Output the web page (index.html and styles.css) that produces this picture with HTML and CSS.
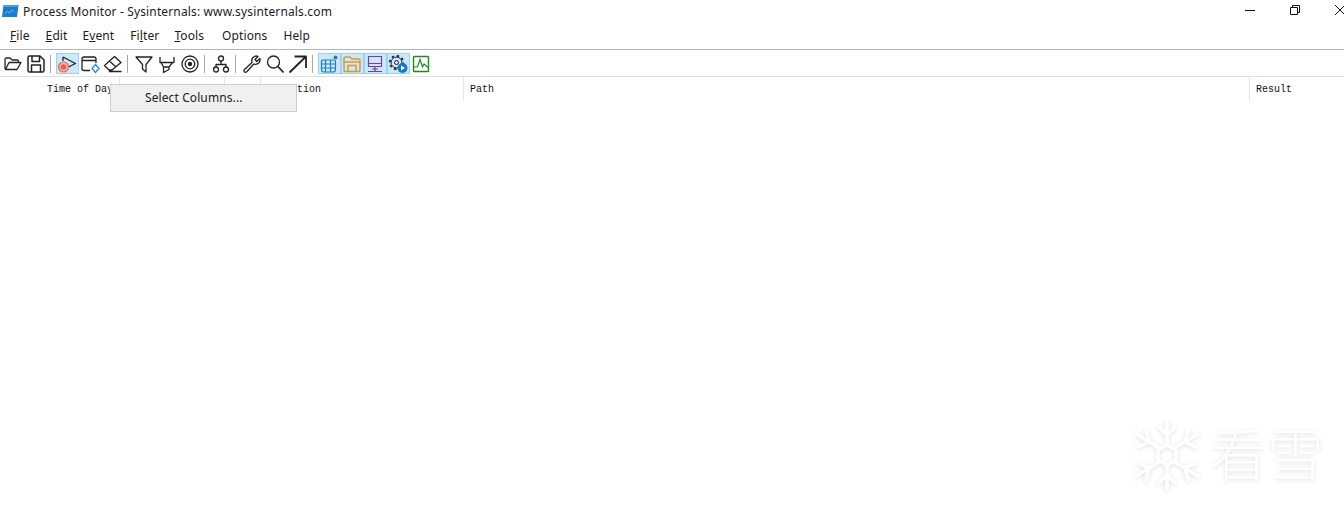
FILE: index.html
```html
<!DOCTYPE html>
<html lang="en">
<head>
<meta charset="utf-8">
<title>Process Monitor - Sysinternals: www.sysinternals.com</title>
<link rel="stylesheet" href="styles.css">
</head>
<body>
<div class="app">
  <header class="titlebar">
    <svg class="appicon" width="18" height="14" viewBox="0 0 18 14"><path d="M2.500 1H17.500L16 13H1Z" fill="#1a7ed0"/><path d="M2.500 1H17.500L17.200 3H2.200Z" fill="#4a9fe6"/><path d="M4 9L6.500 7.500L8.500 9L11 6L13.500 8" fill="none" stroke="#6db4ea" stroke-width="1"/></svg>
    <span class="title">Process Monitor - Sysinternals: www.sysinternals.com</span>
    <div class="controls">
      <span class="ctl"><svg width="12" height="12" viewBox="0 0 12 12"><path d="M1 6.5H11" stroke="#111" stroke-width="1"/></svg></span>
      <span class="ctl"><svg width="12" height="12" viewBox="0 0 12 12"><path d="M1.5 3.5H8.5V10.5H1.5Z M3.5 3.5V1.5H10.5V8.5H8.5" fill="none" stroke="#111" stroke-width="1"/></svg></span>
      <span class="ctl"><svg width="12" height="12" viewBox="0 0 12 12"><path d="M1 1L11 11M11 1L1 11" stroke="#111" stroke-width="1"/></svg></span>
    </div>
  </header>
  <nav class="menubar">
    <span class="m"><u>F</u>ile</span>
    <span class="m"><u>E</u>dit</span>
    <span class="m m-back">E<u>v</u>ent</span>
    <span class="m">Fi<u>l</u>ter</span>
    <span class="m m-back"><u>T</u>ools</span>
    <span class="m m-options">Options</span>
    <span class="m">Help</span>
  </nav>
  <div class="toolbar">
    <span class="btn"><svg viewBox="0 0 20 20"><path d="M2 15V5.5Q2 4 3.5 4H7L9 6H14Q15.500 6 15.500 7.500V8.500M2.500 15.500H14L18 8.500H6L2.500 15.500Z" class="k"/></svg></span>
    <span class="btn"><svg viewBox="0 0 20 20"><path d="M3.500 2H14L18 6V16.500Q18 18 16.500 18H3.500Q2 18 2 16.500V3.500Q2 2 3.500 2Z M6 2.500V7.500H13.500V2.500 M5.500 18V11H14.500V18" class="k k2"/></svg></span>
    <span class="sep"></span>
    <span class="btn on"><svg viewBox="0 0 20 20"><path d="M6 3L18.500 9.500L11.500 13M6 3V7" class="k"/><circle cx="6.500" cy="13" r="5" fill="#fbb9a8" stroke="#e9694f" stroke-width="1.200"/><circle cx="6.500" cy="13" r="2.800" fill="#ee5f45"/></svg></span>
    <span class="btn"><svg viewBox="0 0 20 20"><path d="M10 16.500H4Q2 16.500 2 14.500V5Q2 3 4 3H14Q16 3 16 5V9M2 6.500H16" class="k"/><path d="M15.500 10.500L19 14.500L15.500 18.500L12 14.500Z" fill="none" stroke="#1e88e5" stroke-width="1.300"/></svg></span>
    <span class="btn"><svg viewBox="0 0 20 20"><path d="M1.500 11.500L11.500 2.500L18 8.500L9 16H6Z M6.500 7L13 13 M6 17.500H18.500" class="k"/></svg></span>
    <span class="sep"></span>
    <span class="btn"><svg viewBox="0 0 20 20"><path d="M2 3H18L12 10.500V18L8.500 15V10.500Z" class="k"/></svg></span>
    <span class="btn"><svg viewBox="0 0 20 20"><path d="M3 3V8.500H17V3M4 8.500L6.500 13H12L15.500 8.500M6.500 13V18.500L12 15.500V13" class="k"/></svg></span>
    <span class="btn"><svg viewBox="0 0 20 20"><circle cx="10" cy="10" r="8" class="k"/><circle cx="10" cy="10" r="4.800" class="k"/><circle cx="10" cy="10" r="2.200" fill="#222"/></svg></span>
    <span class="sep"></span>
    <span class="btn"><svg viewBox="0 0 20 20"><circle cx="10" cy="4.500" r="2.500" class="k"/><circle cx="5" cy="15.500" r="2.500" class="k"/><circle cx="15" cy="15.500" r="2.500" class="k"/><path d="M10 7V10M5 13V10.500H15V13" class="k"/></svg></span>
    <span class="sep"></span>
    <span class="btn"><svg viewBox="0 0 20 20"><path d="M2.500 15.500L10 8.500Q9 4 12.500 2.500Q14.500 1.500 16 2.500L13 5.500L14.800 7.500L17.800 4.500Q18.500 7 17 8.800Q14.800 11 11.800 10L4.800 17.800Q3.500 18.800 2.300 17.800Q1.500 16.500 2.500 15.500Z" class="k"/></svg></span>
    <span class="btn"><svg viewBox="0 0 20 20"><circle cx="8.500" cy="8" r="6" class="k"/><path d="M13 12.500L18.500 18.500" class="k k3"/></svg></span>
    <span class="btn"><svg viewBox="0 0 20 20"><path d="M1.500 18.500L17.500 3M6.500 2.500H18V14" class="k k3"/></svg></span>
    <span class="sep"></span>
    <span class="btn on"><svg viewBox="0 0 20 20"><path d="M3.500 6H14.500Q16.500 6 16.500 8V15.500Q16.500 18 14 18H5Q2.500 18 2.500 15.500V7ZM2.500 10H16.500M2.500 14H16.500M6.500 6V18M11.500 6V18" fill="none" stroke="#1a7fc4" stroke-width="1.200"/><circle cx="16.500" cy="3.500" r="2" fill="#1a7fc4"/></svg></span>
    <span class="btn on"><svg viewBox="0 0 20 20"><path d="M2 16V4.500Q2 3 3.500 3H8L10 5H16.500Q18 5 18 6.500V16Q18 17.500 16.500 17.500H3.500Q2 17.500 2 16ZM2 8H18M6 17.500V11.500H14V17.500" fill="none" stroke="#dd9a20" stroke-width="1.500"/></svg></span>
    <span class="btn on"><svg viewBox="0 0 20 20"><path d="M3.500 2.500H16.500V12.500H3.500ZM10 12.500V17M3 17.500H17M7 15H13" fill="none" stroke="#7a3ca1" stroke-width="1.200"/><path d="M3.500 9.500H16.500" stroke="#7a3ca1" stroke-width="1"/></svg></span>
    <span class="btn on"><svg viewBox="0 0 20 20"><circle cx="8.500" cy="8.500" r="5.400" fill="none" stroke="#222" stroke-width="1"/><circle cx="8.500" cy="8.500" r="6.700" fill="none" stroke="#222" stroke-width="1.800" stroke-dasharray="2.600 2.660"/><circle cx="8.500" cy="8.500" r="2" fill="none" stroke="#222" stroke-width="1"/><circle cx="14.500" cy="14" r="5" fill="#1378d0"/><path d="M13 11.500L17 14L13 16.500Z" fill="#fff"/></svg></span>
    <span class="btn"><svg viewBox="0 0 20 20"><rect x="2.500" y="2.500" width="15" height="15" rx="0.800" fill="none" stroke="#1e8a1e" stroke-width="1.400"/><path d="M3 13H6.500L9 5.500L11.500 13L13 10L17 13.500" fill="none" stroke="#1e8a1e" stroke-width="1.200"/></svg></span>
  </div>
  <div class="columns">
    <span class="col c-time">Time of Day</span>
    <span class="col c-proc"></span>
    <span class="col c-pid"></span>
    <span class="col c-op">Operation</span>
    <span class="col c-path">Path</span>
    <span class="col c-result">Result</span>
  </div>
  <div class="ctxmenu">Select Columns...</div>
  <div class="watermark">
    <svg width="68" height="76" viewBox="0 0 68 76"><g fill="none" stroke="#fff" stroke-width="3.500" stroke-linecap="round"><path d="M34 3V28M34 48V73M26 10L34 18L42 10M26 66L34 58L42 66"/><path d="M3 17L25 30M43 46L65 59M5 30L16 25L13 13M63 46L52 51L55 63"/><path d="M65 17L43 30M25 46L3 59M63 30L52 25L55 13M5 46L16 51L13 63"/><path d="M34 28L43 33V43L34 48L25 43V33Z"/></g></svg>
    <span class="wm-text">看雪</span>
  </div>
</div>
</body>
</html>
```
FILE: styles.css
```css
html, body {
  margin: 0;
  padding: 0;
  background: #fff;
}
.app {
  position: relative;
  display: flex;
  flex-direction: column;
  width: 1344px;
  height: 517px;
  overflow: hidden;
  font-family: "Noto Sans", "Liberation Sans", sans-serif;
  color: #1c1c1c;
}
.titlebar {
  display: flex;
  align-items: center;
  height: 22px;
  flex: none;
}
.appicon {
  margin-left: 1px;
  margin-right: 4px;
  flex: none;
}
.title {
  font-size: 12px;
  letter-spacing: 0.14px;
  white-space: nowrap;
}
.controls {
  display: flex;
  margin-left: auto;
  margin-right: -18px;
}
.ctl {
  display: flex;
  justify-content: center;
  width: 45px;
  height: 18px;
  padding-top: 3px;
}
.menubar {
  display: flex;
  align-items: center;
  flex: none;
  height: 27px;
  padding-left: 10px;
  gap: 16px;
  border-bottom: 1px solid #b4b4bc;
  font-size: 12px;
  letter-spacing: 0.1px;
}
.m-back {
  margin-left: -1px;
}
.m-options {
  margin-left: 2px;
}
.toolbar {
  display: flex;
  flex: none;
  box-sizing: border-box;
  height: 27px;
  padding: 3px 0 0 2px;
  border-bottom: 1px solid #e0e0e0;
}
.btn {
  display: flex;
  align-items: center;
  justify-content: center;
  box-sizing: border-box;
  width: 23px;
  height: 21px;
  padding-right: 1px;
}
.btn svg {
  flex: none;
  width: 20px;
  height: 20px;
}
.on {
  background: #cce8ff;
  box-shadow: inset 0 0 0 1px #99d1ff;
}
.k {
  fill: none;
  stroke: #222;
  stroke-width: 1.300;
  stroke-linejoin: round;
}
.k2 {
  stroke-width: 1.500;
}
.k3 {
  stroke-width: 1.800;
}
.sep {
  width: 8px;
  height: 21px;
  box-sizing: border-box;
  padding-left: 2px;
  background: linear-gradient(#a8a8a8, #a8a8a8) 2px 2px / 1px 18px no-repeat;
}
.columns {
  display: flex;
  flex: none;
  height: 24px;
  font-family: "Liberation Mono", monospace;
  font-size: 10px;
  line-height: 26px;
  color: #111;
}
.col {
  box-sizing: border-box;
  flex: none;
  padding-left: 6px;
  border-right: 1px solid #e5e5e5;
  white-space: nowrap;
}
.c-time {
  width: 120px;
  padding-left: 47px;
}
.c-proc { width: 105px; }
.c-pid { width: 36px; }
.c-op { width: 203px; }
.c-path { width: 786px; }
.c-result { border-right: 0; }
.ctxmenu {
  position: absolute;
  left: 110px;
  top: 84px;
  box-sizing: border-box;
  width: 187px;
  height: 28px;
  padding-left: 34px;
  background: #f0f0f0;
  border: 1px solid #ccc;
  font-size: 12px;
  line-height: 26px;
  letter-spacing: 0.1px;
  color: #222;
}
.watermark {
  position: absolute;
  left: 1133px;
  top: 417px;
  display: flex;
  align-items: flex-start;
  gap: 9px;
  filter: drop-shadow(0 1px 2px rgba(0, 0, 0, 0.12));
}
.wm-text {
  margin-top: -4px;
  font-family: "Noto Sans CJK SC", sans-serif;
  font-size: 57px;
  font-weight: 300;
  line-height: 76px;
  color: #fff;
  white-space: nowrap;
}
```
